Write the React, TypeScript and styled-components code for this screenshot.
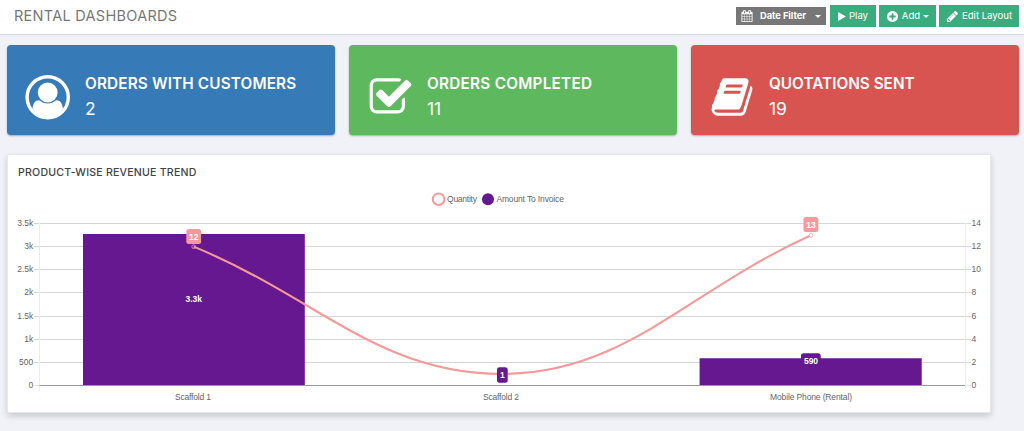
import React from "react";
import styled, { createGlobalStyle } from "styled-components";

const GlobalStyle = createGlobalStyle`
  * { box-sizing: border-box; }
  body { margin: 0; background: #f0f2f7; font-family: Inter, "Liberation Sans", sans-serif; }
`;

const Page = styled.div`
  height: 431px;
  overflow: hidden;
  background: #f0f2f7;
`;

const Header = styled.header`
  height: 35px;
  padding: 0 5px 2px 14px;
  display: flex;
  align-items: center;
  justify-content: space-between;
  background: #fff;
  border-bottom: 1px solid #d5d9dc;
`;

const PageTitle = styled.h1`
  margin: 0;
  font-size: 14.5px;
  font-weight: 400;
  letter-spacing: 0.28px;
  line-height: 20px;
  color: #777;
`;

const Actions = styled.div`
  display: flex;
  align-items: center;
  gap: 3px;
`;

const ActionButton = styled.button<{ $width: number }>`
  width: ${(p) => p.$width}px;
  height: 22px;
  padding: 0;
  border: 0;
  display: flex;
  align-items: center;
  justify-content: center;
  gap: 3px;
  background: #3aad7e;
  color: #fff;
  font: 400 9.6px/14px Inter, sans-serif;
  letter-spacing: -0.02px;
  white-space: nowrap;
`;

const DateButton = styled.button`
  width: 90px;
  height: 18px;
  margin-right: 1px;
  padding: 0 5px;
  border: 0;
  display: flex;
  align-items: center;
  background: #777;
  color: #fff;
  font: 700 9.3px/14px Inter, sans-serif;
  letter-spacing: -0.05px;
  white-space: nowrap;
`;

const DateText = styled.span`
  margin-left: 7px;
  flex: 1;
  text-align: left;
`;

const Caret = styled.span`
  border: 3px solid transparent;
  border-top: 3px solid #fff;
  border-bottom: 0;
`;

const Tiles = styled.section`
  display: grid;
  grid-template-columns: repeat(3, 328px);
  gap: 14px;
  padding: 10px 7px 0;
`;

const Tile = styled.article<{ $color: string }>`
  height: 90px;
  padding: 14px 18px 0;
  display: flex;
  align-items: center;
  background: ${(p) => p.$color};
  border-radius: 4px;
  color: #fff;
  box-shadow: 0 1px 2px rgba(0, 0, 0, 0.3);
`;

const TileIcon = styled.div`
  width: 46px;
  height: 47px;
  display: flex;
  align-items: center;
  justify-content: center;
  flex: none;
`;

const TileBody = styled.div`
  margin-left: 14px;
  padding-top: 2px;
`;

const TileTitle = styled.h2<{ $spacing: number }>`
  margin: 0;
  font-size: 15.3px;
  font-weight: 600;
  line-height: 22px;
  letter-spacing: ${(p) => p.$spacing}px;
  white-space: nowrap;
`;

const TileValue = styled.div`
  font-size: 17.5px;
  line-height: 28px;
`;

const Panel = styled.section`
  width: 984px;
  height: 259px;
  margin: 19px 0 0 7px;
  background: #fff;
  border: 1px solid #e6e7e9;
  border-radius: 2px;
  box-shadow: 0 3px 6px rgba(0, 0, 0, 0.17);
`;

const PanelTitle = styled.h3`
  margin: 10px 0 0 10px;
  height: 16px;
  font-size: 10.6px;
  font-weight: 500;
  line-height: 16px;
  letter-spacing: 0.2px;
  color: #444;
`;

const Chart = styled.svg`
  display: block;
  font-family: "Liberation Sans", Arial, sans-serif;
  font-size: 8.5px;
  fill: #666;
`;

const Glyph = styled.svg`
  display: block;
  flex: none;
  fill: currentColor;
`;

const paths = {
  check:
    "M1472 930v318q0 119-84.5 203.5t-203.5 84.5h-832q-119 0-203.5-84.5t-84.5-203.5v-832q0-119 84.5-203.5t203.5-84.5h832q63 0 117 25 15 7 18 23 3 17-9 29l-49 49q-10 10-23 10-3 0-9-2-23-6-45-6h-832q-66 0-113 47t-47 113v832q0 66 47 113t113 47h832q66 0 113-47t47-113v-254q0-13 9-22l64-64q10-10 23-10 6 0 12 3 20 8 20 29zm231-489l-814 814q-24 24-57 24t-57-24l-430-430q-24-24-24-57t24-57l110-110q24-24 57-24t57 24l263 263 647-647q24-24 57-24t57 24l110 110q24 24 24 57t-24 57z",
  book:
    "M1703 478q40 57 18 129l-275 906q-19 64-76.5 107.5t-122.5 43.5h-923q-77 0-148.5-53.5t-99.5-131.5q-24-67-2-127 0-4 3-27t4-37q1-8-3-21.5t-3-19.5q2-11 8-21t16.5-23.5 16.5-23.5q23-38 45-91.5t30-91.5q3-10 .5-30t-.5-28q3-11 17-28t17-23q21-36 42-92t25-90q1-9-2.5-32t.5-28q4-13 22-30.5t22-22.5q19-26 42.5-84.5t27.5-96.5q1-8-3-25.5t-2-26.5q2-8 9-18t18-23 17-21q8-12 16.5-30.5t15-35 16-36 19.5-32 26.5-23.5 36-11.5 47.5 5.5l-1 3q38-9 51-9h761q74 0 114 56t18 130l-274 906q-36 119-71.5 153.5t-128.5 34.5h-869q-27 0-38 15-11 16-1 43 24 70 144 70h923q29 0 56-15.5t35-41.5l300-987q7-22 5-57 38 15 59 43zm-1064 2q-4 13 2 22.5t20 9.5h608q13 0 25.5-9.5t16.5-22.5l21-64q4-13-2-22.5t-20-9.5h-608q-13 0-25.5 9.5t-16.5 22.5zm-83 256q-4 13 2 22.5t20 9.5h608q13 0 25.5-9.5t16.5-22.5l21-64q4-13-2-22.5t-20-9.5h-608q-13 0-25.5 9.5t-16.5 22.5z",
  pencil:
    "M491 1536l91-91-235-235-91 91v107h128v128h107zm523-928q0-22-22-22-10 0-17 7l-542 542q-7 7-7 17 0 22 22 22 10 0 17-7l542-542q7-7 7-17zm-54-192l416 416-832 832h-416v-416zm683 96q0 53-37 90l-166 166-416-416 166-165q36-38 90-38 53 0 91 38l235 234q37 39 37 91z",
  calendar:
    "M192 1664h288v-288h-288v288zm352 0h320v-288h-320v288zm-352-352h288v-320h-288v320zm352 0h320v-320h-320v320zm-352-384h288v-288h-288v288zm736 736h320v-288h-320v288zm-384-736h320v-288h-320v288zm768 736h288v-288h-288v288zm-384-352h320v-320h-320v320zm-352-864v-288q0-13-9.5-22.5t-22.5-9.5h-64q-13 0-22.5 9.5t-9.5 22.5v288q0 13 9.5 22.5t22.5 9.5h64q13 0 22.5-9.5t9.5-22.5zm736 864h288v-320h-288v320zm-384-384h320v-288h-320v288zm384 0h288v-288h-288v288zm32-480v-288q0-13-9.5-22.5t-22.5-9.5h-64q-13 0-22.5 9.5t-9.5 22.5v288q0 13 9.5 22.5t22.5 9.5h64q13 0 22.5-9.5t9.5-22.5zm384-64v1280q0 52-38 90t-90 38h-1408q-52 0-90-38t-38-90v-1280q0-52 38-90t90-38h128v-96q0-66 47-113t113-47h64q66 0 113 47t47 113v96h384v-96q0-66 47-113t113-47h64q66 0 113 47t47 113v96h128q52 0 90 38t38 90z",
  plus:
    "M1344 960v-128q0-26-19-45t-45-19h-256v-256q0-26-19-45t-45-19h-128q-26 0-45 19t-19 45v256h-256q-26 0-45 19t-19 45v128q0 26 19 45t45 19h256v256q0 26 19 45t45 19h128q26 0 45-19t19-45v-256h256q26 0 45-19t19-45zm320-64q0 209-103 385.5t-279.5 279.5-385.5 103-385.5-103-279.5-279.5-103-385.5 103-385.5 279.5-279.5 385.5-103 385.5 103 279.5 279.5 103 385.5z",
};

function Icon({ name, size }: { name: keyof typeof paths; size: number }) {
  return (
    <Glyph width={size} height={size} viewBox="0 0 1792 1792">
      <path d={paths[name]} />
    </Glyph>
  );
}

function CustomerIcon() {
  return (
    <Glyph width="46" height="46" viewBox="0 0 46 46">
      <circle cx="22.7" cy="23.3" r="20.6" fill="none" stroke="currentColor" strokeWidth="3.4" />
      <circle cx="22.7" cy="18.5" r="9.9" />
      <path d="M7.5 34.5C8 29.5 10 26.2 14.2 26.2C16.5 28.2 19.5 29.5 22.7 29.5S28.9 28.2 31.2 26.2C35.4 26.2 37.4 29.5 37.9 34.5C34.5 40 29 43.5 22.7 43.5S10.9 40 7.5 34.5Z" />
    </Glyph>
  );
}

const TOP = 223.5;
const STEP = 23.14;
const leftTicks = ["3.5k", "3k", "2.5k", "2k", "1.5k", "1k", "500", "0"];
const rightTicks = ["14", "12", "10", "8", "6", "4", "2", "0"];

function RevenueChart() {
  return (
    <Chart width="981" height="231" viewBox="8 181 981 231">
      <circle cx="438.6" cy="199.2" r="5.8" fill="#fff" stroke="#f49a9a" strokeWidth="2" />
      <text x="447" y="202" textLength="30">Quantity</text>
      <circle cx="488" cy="199.2" r="6" fill="#65188f" />
      <text x="496.4" y="202" textLength="67.5">Amount To Invoice</text>

      {leftTicks.map((t, i) => {
        const y = Math.round(TOP + i * STEP - 0.5) + 0.5;
        return (
          <g key={t}>
            <path d={`M34 ${y}H971`} stroke={i === 7 ? "#e3e3e3" : "#d6d6d6"} />
            <text x="33.3" y={y + 2.6} textAnchor="end">{t}</text>
            <text x="971.6" y={y + 2.6}>{rightTicks[i]}</text>
          </g>
        );
      })}
      <path d="M39.5 223V391M965.5 223V391" stroke="#ececec" />
      <path d="M83 234H304.8V385.5H83ZM699.6 358.2H921.7V385.5H699.6Z" fill="#65188f" />
      <path d="M39.5 385.5H965" stroke="#999" />
      <path
        d="M193.7 246.6C317 297.5 379 373.9 502 373.9S688 290.5 811 235.3"
        fill="none"
        stroke="#f49a9a"
        strokeWidth="2.1"
      />
      <circle cx="193.7" cy="246.7" r="1.9" fill="none" stroke="#f49a9a" strokeWidth="0.8" />
      <circle cx="811" cy="235.3" r="1.9" fill="#fff" stroke="#f49a9a" strokeWidth="0.8" />

      <rect x="186.3" y="229" width="14.8" height="15" rx="2.5" fill="#f49a9a" />
      <rect x="803.5" y="217" width="14.8" height="15" rx="2.5" fill="#f49a9a" />
      <rect x="497" y="367.3" width="10.7" height="15.4" rx="2.5" fill="#65188f" />
      <rect x="801" y="353.3" width="19.7" height="15" rx="2.5" fill="#65188f" />
      <g fill="#fff" fontWeight="700" textAnchor="middle">
        <text x="193.7" y="239.5">12</text>
        <text x="811" y="227.5">13</text>
        <text x="502.3" y="378">1</text>
        <text x="811" y="364">590</text>
        <text x="193.7" y="302">3.3k</text>
      </g>
      <g textAnchor="middle">
        <text x="193" y="399.5" textLength="36">Scaffold 1</text>
        <text x="501" y="399.5" textLength="36">Scaffold 2</text>
        <text x="811" y="399.5" textLength="82">Mobile Phone (Rental)</text>
      </g>
    </Chart>
  );
}

export default function App() {
  return (
    <Page>
      <GlobalStyle />
      <Header>
        <PageTitle>RENTAL DASHBOARDS</PageTitle>
        <Actions>
          <DateButton>
            <Icon name="calendar" size={12} />
            <DateText>Date Filter</DateText>
            <Caret />
          </DateButton>
          <ActionButton $width={46}>
            <Glyph width="8" height="9" viewBox="0 0 7 8"><path d="M0 0L7 4L0 8Z" /></Glyph>
            Play
          </ActionButton>
          <ActionButton $width={57}>
            <Icon name="plus" size={13} />
            Add
            <Caret />
          </ActionButton>
          <ActionButton $width={80}>
            <Icon name="pencil" size={13} />
            Edit Layout
          </ActionButton>
        </Actions>
      </Header>
      <Tiles>
        <Tile $color="#367ab7">
          <TileIcon><CustomerIcon /></TileIcon>
          <TileBody>
            <TileTitle $spacing={0.15}>ORDERS WITH CUSTOMERS</TileTitle>
            <TileValue>2</TileValue>
          </TileBody>
        </Tile>
        <Tile $color="#5eb85e">
          <TileIcon><Icon name="check" size={45} /></TileIcon>
          <TileBody>
            <TileTitle $spacing={0.26}>ORDERS COMPLETED</TileTitle>
            <TileValue>11</TileValue>
          </TileBody>
        </Tile>
        <Tile $color="#d85450">
          <TileIcon><Icon name="book" size={44} /></TileIcon>
          <TileBody>
            <TileTitle $spacing={0.02}>QUOTATIONS SENT</TileTitle>
            <TileValue>19</TileValue>
          </TileBody>
        </Tile>
      </Tiles>
      <Panel>
        <PanelTitle>PRODUCT-WISE REVENUE TREND</PanelTitle>
        <RevenueChart />
      </Panel>
    </Page>
  );
}
